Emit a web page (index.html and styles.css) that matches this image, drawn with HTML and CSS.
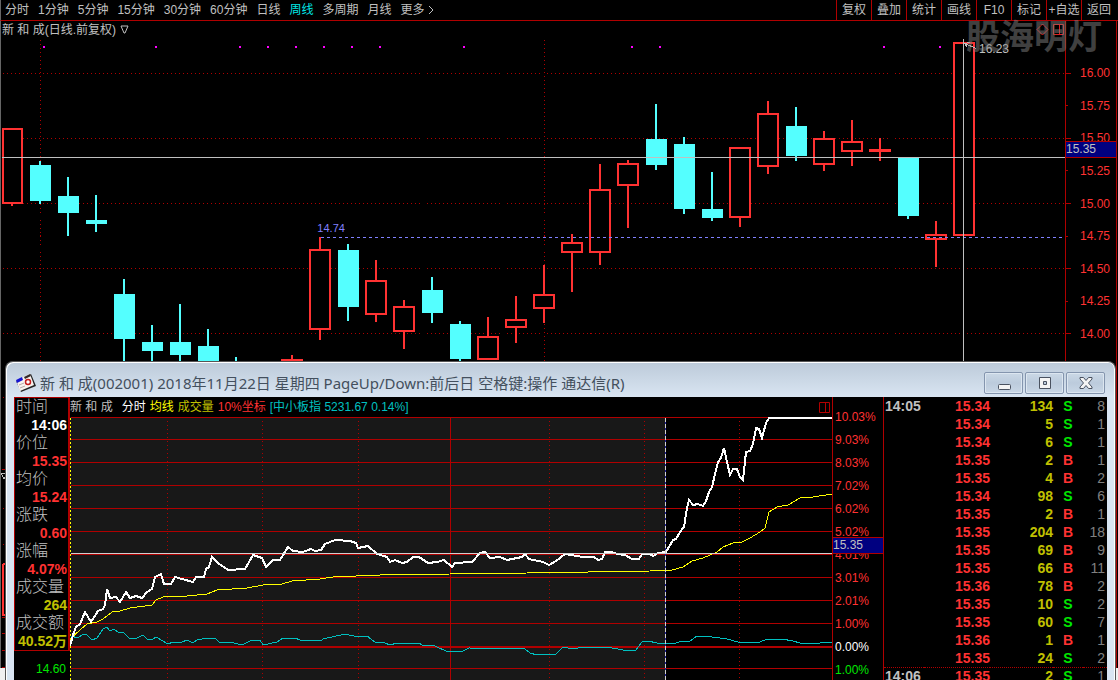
FILE: index.html
```html
<!DOCTYPE html>
<html lang="zh-CN">
<head>
<meta charset="utf-8">
<title>新和成 日线</title>
<link rel="stylesheet" href="styles.css">
</head>
<body>
<div class="app">
  <header class="toolbar">
    <nav class="periods">
      <button>分时</button><button>1分钟</button><button>5分钟</button><button>15分钟</button><button>30分钟</button><button>60分钟</button><button>日线</button><button class="active">周线</button><button>多周期</button><button>月线</button><button>更多 <svg class="chevron" viewBox="0 0 6 10"><path d="M1 1L5 5L1 9"/></svg></button>
    </nav>
    <nav class="tools">
      <button>复权</button><button>叠加</button><button>统计</button><button>画线</button><button>F10</button><button>标记</button><button>+自选</button><button>返回</button>
    </nav>
  </header>

  <main class="board">
    <section class="kline">
      <div class="caption">
        <span>新 和 成(日线.前复权)</span>
        <svg class="tri" viewBox="0 0 9 9"><path d="M1 1H8L5 8H4Z"/></svg>
        <svg class="marks" viewBox="0 0 28 13"><path d="M1 6.500L6.500 1L12 6.500L6.500 12ZM17.500 1.500H27.500V11.500H17.500ZM23.500 1.500V11.500"/></svg>
      </div>
      <svg class="plot" viewBox="1 38 1064 630" preserveAspectRatio="none">
        <g class="dots" transform="translate(.5 .5)">
          <path d="M2 73H1065M2 138H1065M2 203H1065M2 268H1065M2 333H1065"/>
          <path d="M40 39V361M544 39V361"/>
        </g>
        <path class="magenta" d="M43 47h2M155 47h2M239 47h2M267 47h2M295 47h2M323 47h2M351 47h2M379 47h2M463 47h2M631 47h2M659 47h2M883 47h2M939 47h2M967 47h2"/>
        <path class="up" d="M3 129h19v74h-19zM282 360h20v20h-20zM310 250h20v79h-20zM366 281h20v33h-20zM394 307h20v24h-20zM478 337h20v22h-20zM506 320h20v7h-20zM534 295h20v13h-20zM562 243h20v9h-20zM590 190h20v62h-20zM618 164h20v21h-20zM730 148h20v69h-20zM758 114h20v52h-20zM814 139h20v25h-20zM842 142h20v9h-20zM870 150h20v1h-20zM926 235h20v4h-20zM954 43h20v192h-20z"/>
        <path class="up" d="M12 204v2M292 355v4M320 237v12M320 330v10M376 260v20M376 315v7M404 300v6M404 332v17M488 317v19M516 296v23M516 328v15M544 265v29M544 309v14M572 234v8M572 253v39M600 164v25M600 253v12M628 160v3M628 186v42M740 218v9M768 101v12M768 167v7M824 131v7M824 165v6M852 120v21M852 152v14M880 138v23M936 221v13M936 240v27"/>
        <path class="down" d="M30 165h21v36h-21zM58 196h21v17h-21zM86 220h21v4h-21zM114 294h21v45h-21zM142 342h21v9h-21zM170 342h21v13h-21zM198 346h21v20h-21zM338 250h21v57h-21zM422 290h21v23h-21zM450 324h21v35h-21zM646 139h21v26h-21zM674 144h21v65h-21zM702 209h21v9h-21zM786 126h21v30h-21zM898 157h21v59h-21z"/>
        <path class="wick" d="M40 161v43M68 177v59M96 195v37M124 279v82M152 325v36M180 304v57M208 329v20M236 357v5M348 244v77M432 277v46M460 321v41M656 104v66M684 137v77M712 172v49M796 107v54M908 200v19"/>
        <g transform="translate(.5 .5)">
          <path class="level" d="M320 237H1065"/>
          <path class="cross" d="M1 157H1065M963 38V361"/>
          <path class="cross" d="M964 43L976 48M964 43L967 47M964 43L970 42"/>
          <path class="line" d="M1 469H8M1 617H8M1 633H8M1 650H8M1 667H8"/>
          <path class="pane" d="M2 563H8M2 563V614H8"/>
          <path class="dots" d="M2 397H5M2 508H5M2 544H5"/>
        </g>
        <path class="cross" d="M1 473H8L4 479Z"/>
      </svg>
      <span class="low-label">14.74</span>
      <span class="high-label">16.23</span>
    </section>
    <aside class="price-axis">
      <ol>
        <li>16.00</li><li class="minor">15.75</li><li>15.50</li><li class="minor">15.25</li><li>15.00</li><li class="minor">14.75</li><li>14.50</li><li class="minor">14.25</li><li>14.00</li>
      </ol>
      <span class="tag">15.35</span>
    </aside>
    <div class="watermark">股海明灯</div>
  </main>

  <section class="window">
    <header class="titlebar">
      <svg class="logo" viewBox="0 0 22 20">
        <path d="M1 8L16 1L21 13L6 19Z" fill="#222"/>
        <path d="M1 7L15 1L19 12L5 18Z" fill="#f7f2ee"/>
        <path d="M1 7L7 4L8 7L2 10Z" fill="#1414d2"/>
        <path d="M9 4L15 1L16 3L10 6Z" fill="#332a2a"/>
        <path d="M4 12L9 10M5 15L10 13" stroke="#b8a8a8"/>
        <circle cx="13" cy="9" r="2.500" fill="#fff" stroke="#c41c1c" stroke-width="1.500"/>
      </svg>
      <h1>新 和 成(002001) 2018年11月22日 星期四 PageUp/Down:前后日 空格键:操作 通达信(R)</h1>
      <div class="controls">
        <button aria-label="最小化"><svg viewBox="0 0 14 14"><rect x="1.500" y="8.500" width="12" height="5" rx="1"/></svg></button>
        <button aria-label="还原"><svg viewBox="0 0 14 14"><path fill-rule="evenodd" d="M1.500 1.500H12.500V12.500H1.500ZM5.500 5.500V8.500H8.500V5.500Z"/></svg></button>
        <button aria-label="关闭"><svg viewBox="0 0 14 14"><path d="M1 1.500H4.500L7 4.500L9.500 1.500H13V3L9.500 7L13 11V12.500H9.500L7 9.500L4.500 12.500H1V11L4.500 7L1 3Z"/></svg></button>
      </div>
    </header>

    <div class="detail">
      <aside class="quote">
        <dl>
          <dt>时间</dt><dd class="white">14:06</dd>
          <dt>价位</dt><dd>15.35</dd>
          <dt>均价</dt><dd>15.24</dd>
          <dt>涨跌</dt><dd>0.60</dd>
          <dt>涨幅</dt><dd>4.07%</dd>
          <dt>成交量</dt><dd class="gold">264</dd>
          <dt>成交额</dt><dd class="gold">40.52万</dd>
        </dl>
        <p>14.60</p>
      </aside>

      <section class="intraday">
        <div class="legend">
          <span class="name">新 和 成</span><span class="white">分时</span><span class="yellow">均线</span><span class="gold">成交量</span><span class="red">10%坐标</span><span class="teal">[中小板指 5231.67 0.14%]</span>
          <svg class="split" viewBox="0 0 11 11"><path d="M.5.5H10.500V10.500H.5ZM6.500.5V10.500"/></svg>
        </div>
        <svg class="plot" viewBox="70 417 762 263" preserveAspectRatio="none">
          <rect class="past" x="70" y="417" width="595" height="263"/>
          <g transform="translate(.5 .5)">
            <path class="line" d="M70 417H832M70 439H832M70 462H832M70 485H832M70 508H832M70 531H832M70 554H832M70 577H832M70 600H832M70 623H832M70 646H832M70 647H832M70 668H832M450 417V680"/>
            <path class="dots" d="M167 420V680M262 420V680M358 420V680M549 420V680M644 420V680M739 420V680"/>
            <path class="open" d="M70 417V680"/>
          </g>
          <polyline class="index" points="71,636 78,638 83,634 87,635 92,640 97,638 103,629 107,627 110,631 114,629 119,633 123,632 129,638 137,638 143,635 147,639 152,640 156,637 168,644 173,642 182,642 187,640 193,643 197,640 207,638 215,638 219,642 230,642 242,645 252,640 260,640 263,645 277,642 283,638 290,639 295,638 300,640 321,641 323,639 345,634 358,637 367,636 375,642 385,643 390,645 397,643 419,643 422,645 435,646 448,652 463,651 469,648 525,649 530,653 537,655 556,654 563,647 573,649 583,647 607,647 623,650 635,651 642,642 648,641 657,643 676,643 682,641 690,641 697,636 705,636 727,639 738,642 757,643 765,640 782,639 793,641 800,643 820,643 823,642 832,643"/>
          <polyline class="avg" points="71,638 80,630 87,624 97,622 103,619 112,612 120,611 130,608 152,605 156,600 163,597 187,596 207,594 217,590 247,588 263,585 282,584 292,581 320,579 333,577 380,575 450,574 527,573 650,571 672,570 683,567 692,561 703,558 717,552 723,547 733,543 742,542 750,538 760,532 765,528 769,512 777,507 788,505 800,498 813,497 832,494"/>
          <polyline class="price" points="70,646 73,635 76,627 80,624 85,612 91,622 98,611 103,609 105,605 107,589 110,598 116,597 120,602 126,592 130,598 136,596 142,598 147,592 152,589 155,577 161,574 164,584 171,584 175,577 182,579 193,582 196,577 204,577 206,569 209,567 212,557 218,563 228,570 245,569 253,555 262,558 266,567 273,560 280,560 288,547 293,551 303,552 311,549 315,551 321,550 325,544 335,540 350,541 356,543 358,548 368,546 377,554 387,557 390,562 395,560 402,563 407,562 413,557 419,557 428,563 437,562 444,560 452,567 455,563 472,562 480,553 485,552 490,558 500,557 507,560 522,557 525,554 529,559 543,562 549,565 556,561 565,554 583,557 594,557 598,560 602,559 605,552 612,552 617,554 625,555 632,559 639,559 642,554 650,554 653,556 658,553 666,552 673,540 676,539 680,532 684,527 687,508 689,500 693,505 698,504 703,506 706,501 709,492 712,487 715,474 718,462 721,458 724,448 727,462 730,475 733,469 737,469 740,477 743,480 746,452 750,451 753,444 756,428 759,429 762,438 766,423 769,418 832,418"/>
          <g transform="translate(.5 .5)">
            <path class="cursor" d="M70 553H832"/>
            <path class="blue" d="M665 417V680"/>
            <path class="cursor dashed" d="M665 417V680"/>
          </g>
        </svg>
      </section>

      <aside class="pct-axis">
        <ol>
          <li>10.03%</li><li>9.03%</li><li>8.03%</li><li>7.02%</li><li>6.02%</li><li>5.02%</li><li>4.01%</li><li>3.01%</li><li>2.01%</li><li>1.00%</li><li class="white">0.00%</li><li class="green">1.00%</li>
        </ol>
        <span class="tag">15.35</span>
      </aside>

      <table class="ticks">
        <colgroup><col class="c-time"><col class="c-price"><col class="c-vol"><col class="c-side"><col class="c-count"></colgroup>
        <tbody>
          <tr><th>14:05</th><td>15.34</td><td>134</td><td class="sell">S</td><td>8</td></tr>
          <tr><th></th><td>15.34</td><td>5</td><td class="sell">S</td><td>1</td></tr>
          <tr><th></th><td>15.34</td><td>6</td><td class="sell">S</td><td>1</td></tr>
          <tr><th></th><td>15.35</td><td>2</td><td class="buy">B</td><td>1</td></tr>
          <tr><th></th><td>15.35</td><td>4</td><td class="buy">B</td><td>2</td></tr>
          <tr><th></th><td>15.34</td><td>98</td><td class="sell">S</td><td>6</td></tr>
          <tr><th></th><td>15.35</td><td>2</td><td class="buy">B</td><td>1</td></tr>
          <tr><th></th><td>15.35</td><td>204</td><td class="buy">B</td><td>18</td></tr>
          <tr><th></th><td>15.35</td><td>69</td><td class="buy">B</td><td>9</td></tr>
          <tr><th></th><td>15.35</td><td>66</td><td class="buy">B</td><td>11</td></tr>
          <tr><th></th><td>15.36</td><td>78</td><td class="buy">B</td><td>2</td></tr>
          <tr><th></th><td>15.35</td><td>10</td><td class="sell">S</td><td>2</td></tr>
          <tr><th></th><td>15.35</td><td>60</td><td class="sell">S</td><td>7</td></tr>
          <tr><th></th><td>15.36</td><td>1</td><td class="buy">B</td><td>1</td></tr>
          <tr><th></th><td>15.35</td><td>24</td><td class="sell">S</td><td>2</td></tr>
          <tr class="minute"><th>14:06</th><td>15.35</td><td>2</td><td class="sell">S</td><td>1</td></tr>
        </tbody>
      </table>
    </div>
  </section>
</div>
</body>
</html>
```
FILE: styles.css
```css
* { box-sizing: border-box; margin: 0; padding: 0; }

body {
  background: #f0f0f0;
  color: #c0c0c0;
  font: 12px/18px "Liberation Sans", "Noto Sans CJK SC", sans-serif;
}

button { background: none; border: 0; color: inherit; font: inherit; white-space: nowrap; }
ol { list-style: none; }
svg { display: block; fill: none; }

.app {
  position: relative;
  display: flex;
  flex-direction: column;
  height: 100vh;
  padding-bottom: 12px;
  overflow: hidden;
}

/* top toolbar */
.toolbar {
  display: flex;
  justify-content: space-between;
  height: 21px;
  background: #000;
  border-left: 1px solid #666;
  border-bottom: 1px solid #b00000;
}
.periods { display: flex; gap: 9px; padding-left: 4px; }
.periods button { display: flex; align-items: center; gap: 3px; }
.periods .active { color: #00e6e6; }
.chevron { width: 6px; height: 10px; stroke: #c0c0c0; }
.tools { display: flex; padding-right: 2px; }
.tools button { width: 35px; border-left: 1px solid #b00000; text-align: center; }

/* daily chart */
.board {
  position: relative;
  flex: 1;
  display: grid;
  grid-template-columns: 1fr 53px;
  min-height: 0;
  background: #000;
}
.kline { position: relative; display: flex; flex-direction: column; min-width: 0; min-height: 0; }
.caption { display: flex; align-items: center; gap: 4px; height: 17px; padding-left: 1px; border-left: 1px solid #666; }
.tri { width: 9px; height: 9px; stroke: #c0c0c0; }
.marks { width: 28px; height: 13px; margin: 0 1px 0 auto; stroke: #e02020; }
.kline .plot { flex: 1; width: 100%; min-height: 0; border-left: 1px solid #666; }
.plot path, .plot rect { shape-rendering: crispEdges; }

.dots, .dots path { stroke: #b00000; stroke-dasharray: 1 3; }
.magenta { stroke: #f0f; stroke-width: 2; }
.up { stroke: #ff3232; stroke-width: 2; fill: #000; }
.down { fill: #54ffff; }
.wick { stroke: #54ffff; stroke-width: 2; }
.level { stroke: #8080ff; stroke-dasharray: 3 3; }
.cross { stroke: #c0c0c0; }
.line { stroke: #b00000; }
.pane { stroke: #ff3232; stroke-width: 2; }

.low-label, .high-label { position: absolute; font-size: 11px; line-height: 14px; }
.low-label { left: 29.8%; top: 200px; color: #8080ff; }
.high-label { right: 56px; top: 21px; font-size: 12px; }

.watermark {
  position: absolute;
  right: 16px;
  top: -9px;
  color: rgba(128, 128, 128, .5);
  font: bold 34px/46px "Noto Sans CJK SC", sans-serif;
}

.price-axis {
  position: relative;
  margin-right: 1px;
  padding-top: 36px;
  border-left: 1px solid #b00000;
  border-right: 1px solid #b00000;
  color: #ff3232;
}
.price-axis ol { display: flex; flex-direction: column; height: 293px; }
.price-axis li { flex: 1; display: flex; align-items: center; justify-content: space-between; padding-right: 6px; }
.price-axis li::before { content: ""; width: 5px; height: 1px; background: #b00000; }
.price-axis .minor::before { width: 2px; }

.tag {
  position: absolute;
  left: 0;
  right: 0;
  height: 17px;
  background: #000080;
  border: solid #b00000;
  border-width: 1px 0;
  color: #c0c0c0;
  line-height: 15px;
}
.price-axis .tag { top: 120px; }

/* floating intraday window */
.window {
  position: absolute;
  top: 361px;
  left: 5px;
  right: 2px;
  bottom: 0;
  display: flex;
  flex-direction: column;
  padding: 0 8px;
  background: #d7e4f2;
  border: 1px solid #555;
  border-bottom: 0;
  border-radius: 8px 8px 0 0;
  box-shadow: inset 1px 1px #fff, inset -1px 0 #fff;
  background-image: linear-gradient(#bccad9, #d9e5f2 35px);
  overflow: hidden;
}
.titlebar { display: flex; align-items: center; flex: none; gap: 3px; height: 35px; padding: 6px 2px 0 1px; }
.logo { width: 22px; height: 20px; }
.titlebar h1 {
  flex: 1;
  color: #44505e;
  font: 15px/24px "Noto Sans", "Noto Sans CJK SC", sans-serif;
  white-space: nowrap;
}
.controls { display: flex; gap: 2px; }
.controls button {
  display: grid;
  place-items: center;
  width: 39px;
  height: 22px;
  background: linear-gradient(#cbd8e6, #bccbdc 50%, #c9d7e6);
  border: 1px solid #8495ae;
  border-radius: 2px;
  box-shadow: inset 0 0 0 1px #dce6f0;
}
.controls svg { width: 14px; height: 14px; fill: #f4f4f4; stroke: #4a5260; }

.detail {
  flex: 1;
  display: grid;
  grid-template-columns: 56px 1fr 51px 224px;
  min-height: 0;
  background: #000;
}
.detail > * { min-height: 0; min-width: 0; }

.quote dl { border: 1px solid #b00000; border-right-width: 2px; padding-left: 1px; }
.quote dt { font-size: 16px; line-height: 18px; white-space: nowrap; font-weight: 300; }
.quote dd { font-size: 14px; font-weight: bold; text-align: right; color: #ff3232; padding-right: 1px; white-space: nowrap; }
.quote p { padding: 9px 4px 0 0; text-align: right; color: #00e600; }

.quote .white, .white { color: #fff; }
.quote .gold, .gold { color: #c0c000; }
.yellow { color: #ff0; }
.red { color: #ff3232; }
.teal { color: #00c0c0; }
.green { color: #00e600; }

.intraday { display: flex; flex-direction: column; }
.legend { display: flex; align-items: center; flex: none; gap: 4px; height: 20px; padding: 0 2px 0 0; white-space: nowrap; }
.legend .name { margin-right: 5px; }
.split { width: 11px; height: 11px; margin-left: auto; stroke: #b00000; }
.intraday .plot { flex: 1; width: 100%; min-height: 0; }
.past { fill: #181818; }
.open { stroke: #ff0; stroke-dasharray: 2 2; }
.index, .avg, .price { shape-rendering: crispEdges; }
.index { stroke: #00c0c0; }
.avg { stroke: #ff0; }
.price { stroke: #fff; stroke-width: 2; }
.cursor { stroke: #d0d0d0; }
.blue { stroke: #2020a0; }
.dashed { stroke-dasharray: 4 2; }

.pct-axis { position: relative; padding-top: 9px; border-left: 1px solid #b00000; color: #ff3232; }
.pct-axis li { height: 23px; line-height: 23px; padding-left: 2px; }
.pct-axis .white { color: #fff; }
.pct-axis .green { color: #00e600; }
.pct-axis .tag { top: 140px; }

.ticks {
  width: 100%;
  align-self: start;
  border-left: 1px solid #b00000;
  border-spacing: 0;
  table-layout: fixed;
  font-size: 14px;
  font-weight: bold;
  color: #ff3232;
}
.c-time { width: 40px; }
.c-price { width: 66px; }
.c-vol { width: 63px; }
.c-side { width: 30px; }
.ticks tr { height: 18px; }
.ticks th { text-align: left; padding-left: 1px; color: #c0c0c0; }
.ticks td { text-align: right; }
.ticks td:nth-child(3) { color: #c0c000; }
.ticks td:nth-child(4) { text-align: center; }
.ticks td:nth-child(5) { padding-right: 2px; color: #808080; font-weight: normal; }
.ticks .sell { color: #00e600; }
.minute th, .minute td { border-top: 1px dotted #b00000; line-height: 17px; }
```
